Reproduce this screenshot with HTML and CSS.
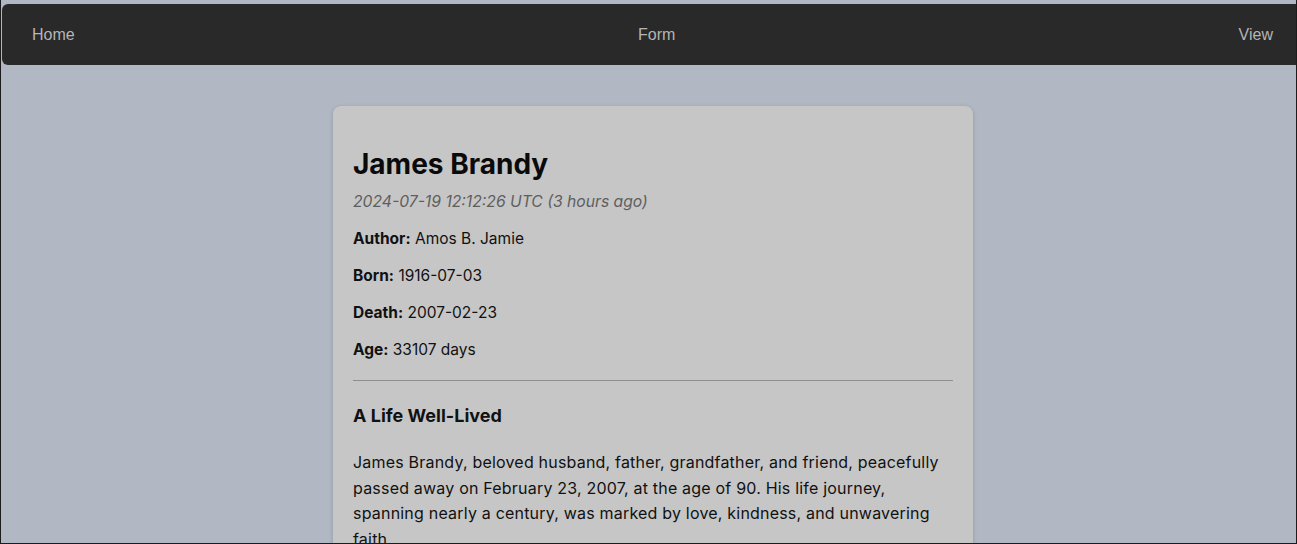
FILE: index.html
```html
<!DOCTYPE html>
<html lang="en">
<head>
<meta charset="utf-8">
<title>James Brandy</title>
<link rel="stylesheet" href="styles.css">
</head>
<body>
<div class="frame">
  <nav class="topbar">
    <a class="nav-link" href="#">Home</a>
    <a class="nav-link" href="#">Form</a>
    <a class="nav-link" href="#">View</a>
  </nav>
  <main class="content">
    <article class="card">
      <h1 class="name">James Brandy</h1>
      <p class="stamp">2024-07-19 12:12:26 UTC (3 hours ago)</p>
      <p class="fact"><strong>Author:</strong> Amos B. Jamie</p>
      <p class="fact"><strong>Born:</strong> 1916-07-03</p>
      <p class="fact"><strong>Death:</strong> 2007-02-23</p>
      <p class="fact"><strong>Age:</strong> 33107 days</p>
      <hr class="rule">
      <h3 class="section-title">A Life Well-Lived</h3>
      <p class="body-text">James Brandy, beloved husband, father, grandfather, and friend, peacefully passed away on February 23, 2007, at the age of 90. His life journey, spanning nearly a century, was marked by love, kindness, and unwavering faith.</p>
    </article>
  </main>
</div>
</body>
</html>
```
FILE: styles.css
```css
* { box-sizing: border-box; }
html, body {
  margin: 0;
  padding: 0;
  height: 100%;
  overflow: hidden;
}
body {
  background: #b1b8c4;
  font-family: Inter, "Noto Sans", sans-serif;
  color: #111;
}
.frame {
  height: 544px;
  border-left: 1px solid #1c1c1c;
  border-right: 1px solid #1c1c1c;
  border-bottom: 1px solid #1c1c1c;
  padding: 4px 0 0 1px;
  overflow: hidden;
}
.topbar {
  height: 61px;
  margin-right: -8px;
  background: #292929;
  border-radius: 6px;
  display: flex;
  align-items: center;
  justify-content: space-between;
  padding: 0 31px 0 30px;
}
.nav-link {
  font-family: "Liberation Sans", Arial, sans-serif;
  font-size: 16px;
  color: #b5b5b5;
  text-decoration: none;
}
.content {
  display: flex;
  justify-content: center;
  padding-top: 41px;
}
.card {
  width: 640px;
  margin-left: 8px;
  background: #c6c6c6;
  border-radius: 8px;
  box-shadow: 0 1px 4px rgba(0,0,0,0.18);
  padding: 20px 20px 40px 20px;
}
.name {
  font-size: 28px;
  font-weight: 700;
  margin: 21px 0 0 0;
  line-height: 34px;
  color: #0a0a0a;
}
.stamp {
  font-style: italic;
  color: #5e5e5e;
  font-size: 15.7px;
  margin: 11px 0 0 0;
  line-height: 20px;
}
.fact {
  font-size: 15.5px;
  margin: 17px 0 0 0;
  line-height: 20px;
}
.fact strong { font-weight: 700; }
.rule {
  border: none;
  border-top: 1px solid #8e8e8e;
  margin: 20px 0 0 0;
}
.section-title {
  font-size: 18px;
  font-weight: 700;
  margin: 23px 0 0 0;
  line-height: 24px;
}
.body-text {
  font-size: 16px;
  letter-spacing: 0.2px;
  line-height: 25.6px;
  margin: 22px 0 0 0;
}
```
